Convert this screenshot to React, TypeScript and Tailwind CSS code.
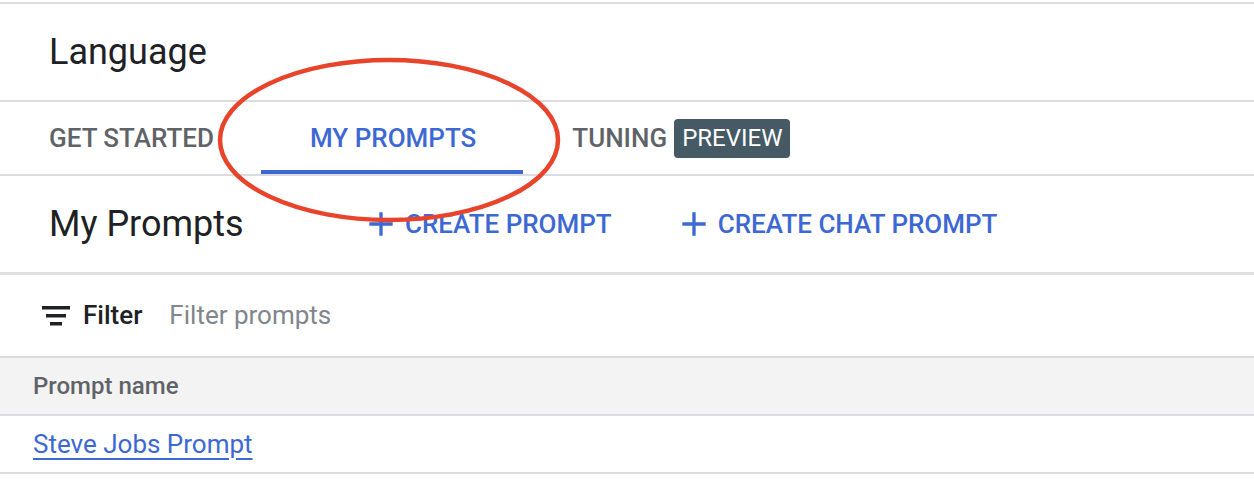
import { useState } from "react";

const font = { fontFamily: "Roboto, 'Noto Sans', Arial, sans-serif" };

const tabs = [
  { label: "GET STARTED" },
  { label: "MY PROMPTS" },
  { label: "TUNING", badge: "PREVIEW" },
];

const PlusIcon = () => (
  <svg width="40" height="40" viewBox="0 0 24 24" className="shrink-0 fill-[#3d68d4]">
    <path d="M19 13h-6v6h-2v-6H5v-2h6V5h2v6h6v2z" />
  </svg>
);

// filter_list, drawn as three bars
const FilterIcon = () => (
  <svg width="28" height="20" viewBox="0 0 28 20" className="shrink-0 fill-[#202124]">
    <rect x="0" y="0" width="28" height="3.5" />
    <rect x="4" y="8" width="20" height="3.5" />
    <rect x="8" y="16" width="12" height="3.5" />
  </svg>
);

export default function App() {
  const [active, setActive] = useState(1);

  return (
    <div className="relative w-[1254px] h-[482px] overflow-hidden bg-white pt-[2px]" style={font}>
      <div className="border-t-2 border-[#dadce0]">
        <div className="h-[96px] flex items-center pl-[49px] text-[36px] text-[#202124]">
          Language
        </div>
      </div>

      <div className="flex h-[76px] border-t-2 border-b-2 border-[#dadce0]">
        {tabs.map((tab, i) => (
          <button
            key={tab.label}
            onClick={() => setActive(i)}
            className={
              "flex items-center gap-[7px] pl-[49px] pr-[47px] pt-1 border-b-4 text-[26px] font-medium " +
              (i === active ? "border-[#3d68d4] text-[#3d68d4]" : "border-transparent text-[#5f6368]")
            }
          >
            {tab.label}
            {tab.badge && (
              <span className="flex items-center h-[39px] px-[8px] rounded-[4px] bg-[#455a64] text-[24px] text-white font-normal">
                {tab.badge}
              </span>
            )}
          </button>
        ))}
      </div>

      <div className="flex items-center h-[99px] border-b-[3px] border-[#e0e0e0]">
        <div className="w-[361px] shrink-0 pl-[49px] text-[36px] text-[#202124]">My Prompts</div>
        <div className="flex items-center gap-[62px] text-[26px] font-medium text-[#3d68d4]">
          <button className="flex items-center gap-[4px]">
            <PlusIcon />
            CREATE PROMPT
          </button>
          <button className="flex items-center gap-[4px]">
            <PlusIcon />
            CREATE CHAT PROMPT
          </button>
        </div>
      </div>

      <div className="flex items-center h-[83px] pl-[42px] border-b-2 border-[#dadce0]">
        <FilterIcon />
        <span className="ml-[13px] text-[26px] font-medium text-[#202124]">Filter</span>
        <span className="ml-[27px] text-[26px] text-[#80868b]">Filter prompts</span>
      </div>

      <div className="flex items-center h-[58px] pl-[33px] bg-[#f3f3f3] border-b-2 border-[#dadce0] text-[24px] font-medium text-[#5f6368]">
        Prompt name
      </div>

      <div className="flex items-center h-[58px] pl-[33px] border-b-2 border-[#dadce0]">
        <a href="#" className="text-[26px] text-[#3d68d4] underline underline-offset-[5px] decoration-2">
          Steve Jobs Prompt
        </a>
      </div>

      <svg className="absolute left-0 top-0 pointer-events-none" width="1254" height="482">
        <ellipse cx="389" cy="140" rx="169" ry="80" fill="none" stroke="#e8432b" strokeWidth="4.5" />
      </svg>
    </div>
  );
}
